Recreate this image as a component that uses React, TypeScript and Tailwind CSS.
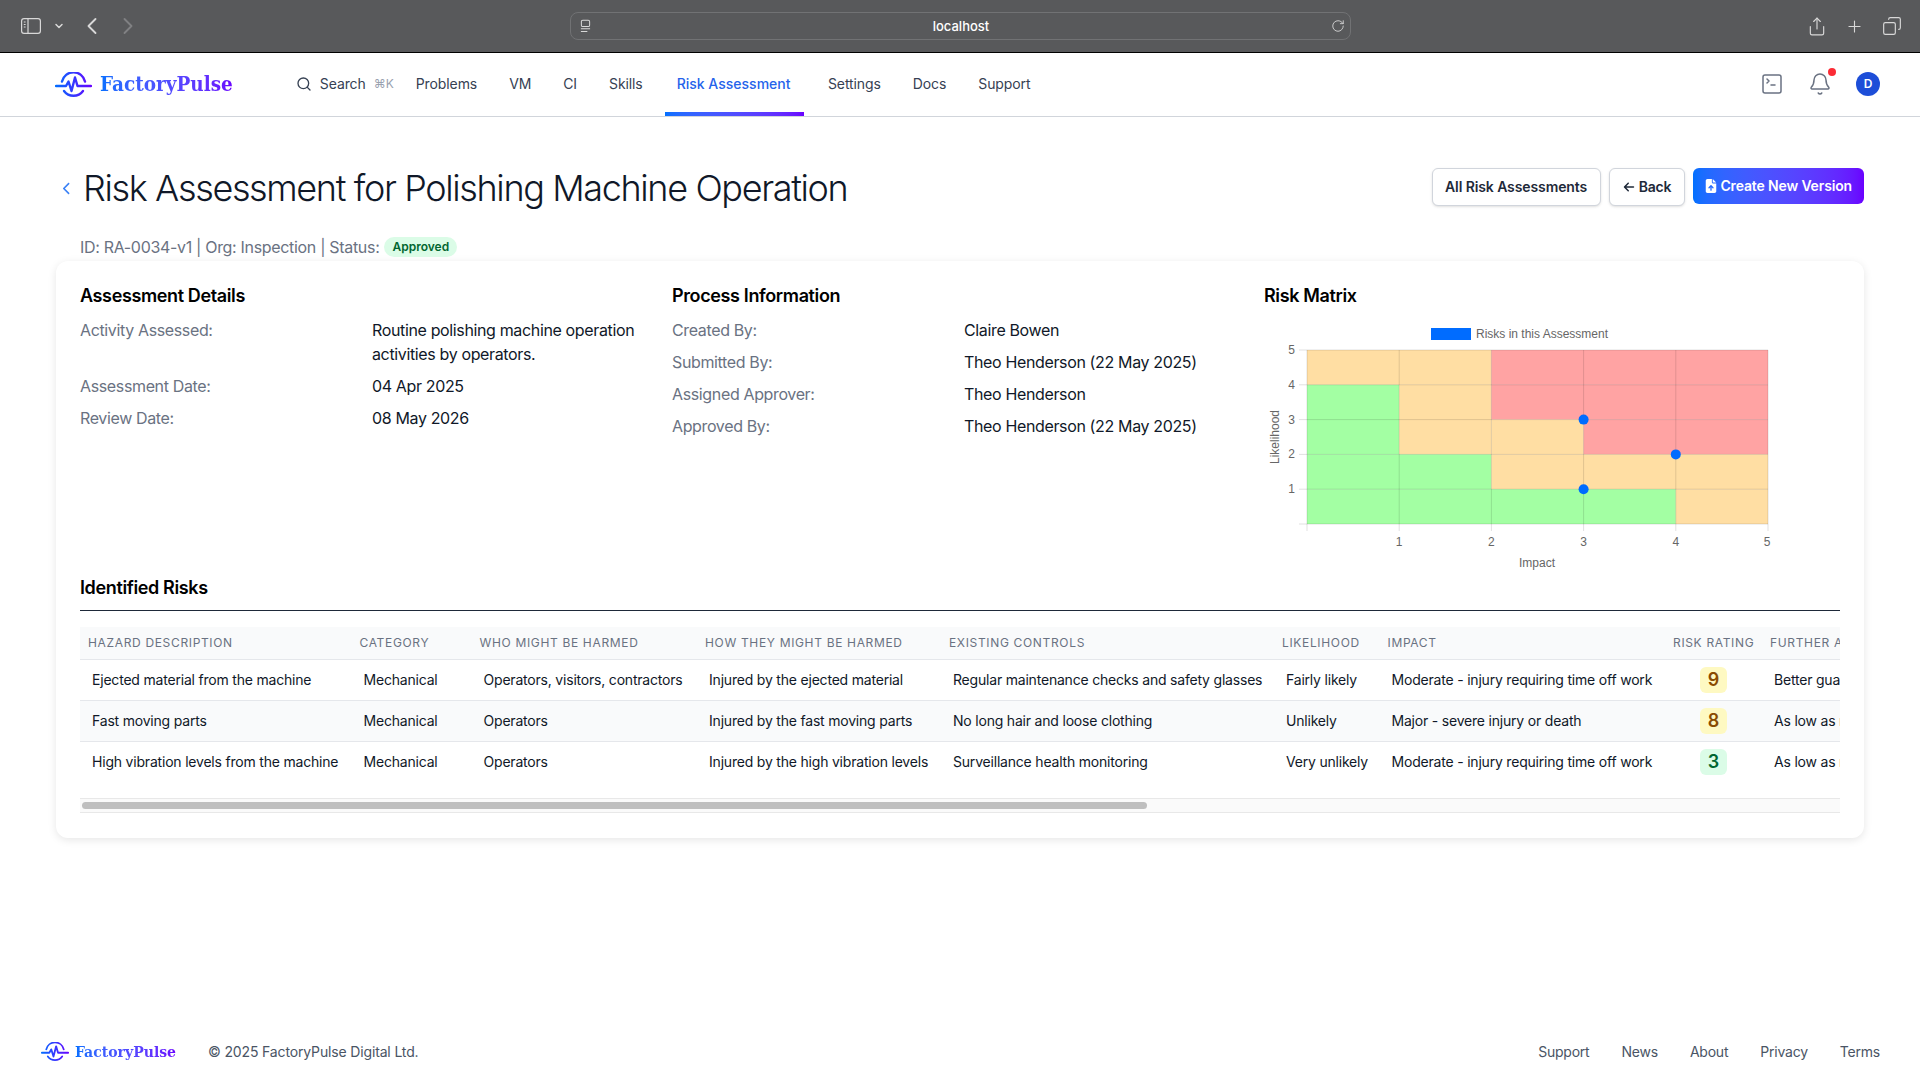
import React from "react";
import { Search, SquareTerminal, Bell, Share, Plus, Copy, RotateCw, ChevronLeft, ChevronRight, ChevronDown } from "lucide-react";
import { FaArrowLeft, FaFileArrowUp, FaChevronLeft } from "react-icons/fa6";

function PulseIcon({ id, className }: { id: string; className: string }) {
  return (
    <svg viewBox="0 0 37 26" className={className} fill="none" stroke={`url(#${id})`} strokeWidth="2.4" strokeLinecap="round" strokeLinejoin="round">
      <defs>
        <linearGradient id={id} gradientUnits="userSpaceOnUse" x1="0" y1="0" x2="37" y2="0">
          <stop offset="0" stopColor="#0070ff" />
          <stop offset="1" stopColor="#6a00ff" />
        </linearGradient>
      </defs>
      <path d="M7 9.5A11.8 11.8 0 0 1 30 9.5" />
      <path d="M9 19A11.8 11.8 0 0 0 28 19" />
      <path d="M1 14H11L13.5 9.5L16.5 19L20 5.5L22.5 14H36" />
    </svg>
  );
}

function Logo({ small, id }: { small?: boolean; id: string }) {
  return (
    <div className={small ? "flex items-center gap-[6px] ml-[1px]" : "flex items-center gap-2"}>
      <PulseIcon id={id} className={small ? "w-[28px] h-[20px]" : "w-[37px] h-[26px]"} />
      <span
        className={
          "font-['DejaVu_Serif_Condensed','DejaVu_Serif',serif] font-bold tracking-normal bg-gradient-to-r from-[#0070ff] to-[#6a00ff] bg-clip-text text-transparent " +
          (small ? "text-[15.6px]" : "text-[20.5px]")
        }
      >
        FactoryPulse
      </span>
    </div>
  );
}

function SafariBar() {
  return (
    <div className="h-[53px] bg-[#58595b] border-b border-black flex items-center text-[#d8d8d8]">
      <div className="w-[570px] flex items-center pl-[21px]">
        <svg viewBox="0 0 20 16" className="w-5 h-4" fill="none" stroke="#d8d8d8" strokeWidth="1.2">
          <rect x="0.6" y="0.6" width="18.8" height="14.8" rx="2.4" />
          <path d="M7 1V15" />
          <path d="M2.8 4H4.6M2.8 6.5H4.6M2.8 9H4.6" />
        </svg>
        <ChevronDown className="w-3 h-3 ml-3" strokeWidth={3} />
        <ChevronLeft className="w-7 h-7 ml-[13px]" strokeWidth={1.6} />
        <ChevronRight className="w-7 h-7 ml-[8px] text-[#808183]" strokeWidth={1.6} />
      </div>
      <div className="w-[781px] h-[28px] rounded-lg border border-[#717274] flex items-center px-2 relative">
        <svg viewBox="0 0 12 14" className="w-[11px] h-[14px] ml-[1px]" fill="none" stroke="#d8d8d8" strokeWidth="1.1">
          <rect x="1.5" y="0.6" width="9" height="7" rx="1.5" />
          <path d="M1 10H11M1 13H8" />
        </svg>
        <span className="flex-1 text-center text-[13px] font-medium text-white pt-[1px]">localhost</span>
        <RotateCw className="w-[14px] h-[14px] mr-[-3px]" strokeWidth={1.5} />
      </div>
      <div className="flex-1 flex items-center justify-end gap-[18px] pr-[18px]">
        <Share className="w-[20px] h-[23px]" strokeWidth={1.4} />
        <Plus className="w-[19px] h-[19px]" strokeWidth={1.4} />
        <Copy className="w-[20px] h-[20px] -scale-x-100" strokeWidth={1.4} />
      </div>
    </div>
  );
}

function NavBar() {
  const items = ["Problems", "VM", "CI", "Skills"];
  const items2 = ["Settings", "Docs", "Support"];
  return (
    <div className="h-[64px] bg-white border-b border-[#d1d5db] flex items-stretch pl-[55px] pr-[40px]">
      <Logo id="lg1" />
      <div className="flex items-center ml-[63px] text-sm text-gray-700 pb-[1px]">
        <Search className="w-4 h-4 text-gray-700" strokeWidth={2} />
        <span className="ml-[8px] tracking-[-0.1px]">Search</span>
        <span className="ml-[8px] text-xs text-gray-400">⌘K</span>
      </div>
      <div className="flex items-stretch gap-2 ml-[10px] text-sm tracking-[-0.1px] text-gray-700">
        {items.map((t) => (
          <div key={t} className="px-3 flex items-center pb-[1px]">{t}</div>
        ))}
        <div className="relative pl-3 pr-[14px] ml-[2px] mr-[3.5px] flex items-center font-medium tracking-normal text-[#2563eb] pb-[1px]">
          Risk Assessment
          <div className="absolute left-0 right-0 bottom-0 h-[4px] bg-gradient-to-r from-[#0070ff] to-[#6a00ff]" />
        </div>
        {items2.map((t) => (
          <div key={t} className="px-3 flex items-center pb-[1px]">{t}</div>
        ))}
      </div>
      <div className="ml-auto flex items-center gap-6 pb-[1px]">
        <SquareTerminal className="w-6 h-6 text-gray-500" strokeWidth={1.5} />
        <div className="relative">
          <Bell className="w-6 h-6 text-gray-500" strokeWidth={1.5} />
          <div className="absolute -top-[4px] -right-[4px] w-2 h-2 rounded-full bg-red-500" />
        </div>
        <div className="w-6 h-6 rounded-full bg-[#1d4ed8] text-white text-xs font-semibold flex items-center justify-center">D</div>
      </div>
    </div>
  );
}

function Rows({ rows }: { rows: [string, string][] }) {
  return (
    <div className="flex flex-col gap-2">
      {rows.map(([k, v]) => (
        <div key={k} className="grid grid-cols-2 gap-2 text-base leading-6 tracking-[-0.36px]">
          <div className="text-gray-500">{k}</div>
          <div className="text-gray-900">{v}</div>
        </div>
      ))}
    </div>
  );
}

function RiskMatrix() {
  const x0 = 43, y0 = 32, cw = 92.2, ch = 34.8;
  const X = (v: number) => x0 + v * cw;
  const Y = (v: number) => y0 + (5 - v) * ch;
  const G = "#a3ffa3", O = "#ffdea3", R = "#ffa3a3";
  const rects: [number, number, number, number, string][] = [
    [0, 4, 2, 1, O], [2, 4, 3, 1, R],
    [0, 2, 1, 2, G], [1, 2, 1, 2, O], [2, 3, 3, 1, R],
    [2, 2, 1, 1, O], [3, 2, 2, 1, R],
    [0, 1, 2, 1, G], [2, 1, 3, 1, O],
    [0, 0, 4, 1, G], [4, 0, 1, 1, O],
  ];
  const tick = { fontFamily: "'Liberation Sans',sans-serif", fontSize: 12, fill: "#666" };
  return (
    <svg viewBox="0 0 512 256" className="w-[512px] h-[256px] block">
      <rect x="167" y="10" width="40" height="12" fill="#006cff" />
      <text x="212" y="20" {...tick}>Risks in this Assessment</text>
      {rects.map(([x, y, w, h, c], i) => (
        <rect key={i} x={X(x)} y={Y(y + h)} width={w * cw} height={h * ch} fill={c} />
      ))}
      {[0, 1, 2, 3, 4, 5].map((v) => (
        <g key={v}>
          <line x1={X(v)} x2={X(v)} y1={y0} y2={Y(0) + 7} stroke="rgba(0,0,0,0.12)" />
          <line x1={x0 - 8} x2={X(5)} y1={Y(v)} y2={Y(v)} stroke="rgba(0,0,0,0.12)" />
          {v > 0 && (
            <>
              <text x={X(v) - (v === 5 ? 1 : 0)} y={228} textAnchor="middle" {...tick}>{v}</text>
              <text x={31} y={Y(v) + 4} textAnchor="end" {...tick}>{v}</text>
            </>
          )}
        </g>
      ))}
      {[[3, 3], [4, 2], [3, 1]].map(([a, b]) => (
        <circle key={`${a}${b}`} cx={X(a)} cy={Y(b)} r="5" fill="#006cff" />
      ))}
      <text x={273} y={249} textAnchor="middle" {...tick}>Impact</text>
      <text transform="translate(15 119) rotate(-90)" textAnchor="middle" {...tick}>Likelihood</text>
    </svg>
  );
}

const heads: [string, string][] = [
  ["Hazard Description", "w-[271.5px]"],
  ["Category", "w-[120px]"],
  ["Who Might Be Harmed", "w-[225.5px]"],
  ["How They Might Be Harmed", "w-[244px]"],
  ["Existing Controls", "w-[333px]"],
  ["Likelihood", "w-[105.5px]"],
  ["Impact", "w-[285.5px]"],
  ["Risk Rating", "w-[97px]"],
  ["Further Actions Required To Reduce The Risk", "w-[1200px]"],
];
const rows = [
  ["Ejected material from the machine", "Mechanical", "Operators, visitors, contractors", "Injured by the ejected material", "Regular maintenance checks and safety glasses", "Fairly likely", "Moderate - injury requiring time off work", "9", "Better guarding of the machine to stop material being ejected"],
  ["Fast moving parts", "Mechanical", "Operators", "Injured by the fast moving parts", "No long hair and loose clothing", "Unlikely", "Major - severe injury or death", "8", "As low as reasonably practicable"],
  ["High vibration levels from the machine", "Mechanical", "Operators", "Injured by the high vibration levels", "Surveillance health monitoring", "Very unlikely", "Moderate - injury requiring time off work", "3", "As low as reasonably practicable"],
];

function RiskTable() {
  return (
    <div className="mt-4">
      <div className="overflow-hidden">
        <table className="table-fixed w-[2882px] border-collapse whitespace-nowrap text-sm text-left">
          <thead>
            <tr className="bg-gray-50 border-b border-gray-200">
              {heads.map(([h, w]) => (
                <th key={h} className={"px-2 py-2 text-xs leading-4 font-normal uppercase tracking-[0.055em] text-gray-500 " + w}>{h}</th>
              ))}
            </tr>
          </thead>
          <tbody>
            {rows.map((r, i) => (
              <tr key={r[0]} className={(i === 1 ? "bg-gray-50 " : "") + (i < 2 ? "border-b border-gray-200" : "")}>
                {r.map((c, j) =>
                  j === 7 ? (
                    <td key={j} className="px-3 py-[7px] text-center">
                      <span className={"inline-block align-middle px-2 rounded-md text-lg leading-[26px] font-semibold " + (c === "3" ? "bg-green-100 text-green-800" : "bg-yellow-100 text-yellow-800")}>{c}</span>
                    </td>
                  ) : (
                    <td key={j} className="px-3 py-[7px] text-gray-900 tracking-[-0.2px]">{c}</td>
                  )
                )}
              </tr>
            ))}
          </tbody>
        </table>
      </div>
      <div className="mt-[16px] h-[15px] bg-[#fafafa] border-y border-[#e8e8e8] flex items-center px-[2px]">
        <div className="w-[1065px] h-[7px] rounded-full bg-[#bfbfbf]" />
      </div>
    </div>
  );
}

export default function App() {
  return (
    <div className="min-h-screen flex flex-col bg-white font-['Inter',sans-serif] text-gray-900">
      <SafariBar />
      <NavBar />
      <main className="px-14 pt-[51px]">
        <div className="flex items-start justify-between">
          <div className="flex items-center h-10">
            <FaChevronLeft className="w-3 h-[13px] ml-[5px] text-[#3b82f6]" />
            <h1 className="ml-[10px] text-4xl font-light tracking-[-1.37px] text-gray-900">Risk Assessment for Polishing Machine Operation</h1>
          </div>
          <div className="flex items-start gap-2">
            <button className="h-[38px] px-[12.5px] rounded-md border border-gray-300 bg-white shadow-sm text-sm font-semibold tracking-[-0.1px] text-gray-800">All Risk Assessments</button>
            <button className="h-[38px] px-[13px] rounded-md border border-gray-300 bg-white shadow-sm text-sm font-semibold tracking-[-0.15px] text-gray-800 flex items-center gap-1">
              <FaArrowLeft className="w-3 h-3" /> Back
            </button>
            <button className="h-[36px] px-3 rounded-md bg-gradient-to-r from-[#0070ff] to-[#6a00ff] text-sm font-semibold tracking-[-0.15px] text-white flex items-center gap-[3px]">
              <FaFileArrowUp className="w-3 h-[14px]" /> Create New Version
            </button>
          </div>
        </div>
        <div className="mt-[27px] pl-6 flex items-center h-6 text-base tracking-[-0.32px] text-gray-500">
          <span>ID: RA-0034-v1 | Org: Inspection | Status:</span>
          <span className="ml-[5px] h-5 px-2 rounded-full bg-green-100 text-green-800 text-xs tracking-normal font-semibold flex items-center">Approved</span>
        </div>
        <div className="mt-[2px] bg-white rounded-xl shadow-[0_2px_8px_rgba(0,0,0,0.1)] px-6 pt-[21px] pb-[25px]">
          <div className="grid grid-cols-3 gap-4">
            <div>
              <h2 className="text-lg font-semibold leading-7 mb-2 tracking-[-0.37px] text-black">Assessment Details</h2>
              <Rows rows={[["Activity Assessed:", "Routine polishing machine operation activities by operators."], ["Assessment Date:", "04 Apr 2025"], ["Review Date:", "08 May 2026"]]} />
            </div>
            <div>
              <h2 className="text-lg font-semibold leading-7 mb-2 tracking-[-0.37px] text-black">Process Information</h2>
              <Rows rows={[["Created By:", "Claire Bowen"], ["Submitted By:", "Theo Henderson (22 May 2025)"], ["Assigned Approver:", "Theo Henderson"], ["Approved By:", "Theo Henderson (22 May 2025)"]]} />
            </div>
            <div>
              <h2 className="text-lg font-semibold leading-7 mb-2 tracking-[-0.37px] text-black">Risk Matrix</h2>
              <RiskMatrix />
            </div>
          </div>
          <h2 className="text-lg font-semibold leading-7 pb-2 border-b border-gray-800 tracking-[-0.37px] text-black">Identified Risks</h2>
          <RiskTable />
        </div>
      </main>
      <footer className="mt-auto h-14 px-10 flex items-center text-sm tracking-[-0.15px] text-gray-600">
        <Logo small id="lg2" />
        <span className="ml-[32px]">© 2025 FactoryPulse Digital Ltd.</span>
        <div className="ml-auto flex gap-8 tracking-[-0.22px]">
          <span>Support</span><span>News</span><span>About</span><span>Privacy</span><span>Terms</span>
        </div>
      </footer>
    </div>
  );
}
